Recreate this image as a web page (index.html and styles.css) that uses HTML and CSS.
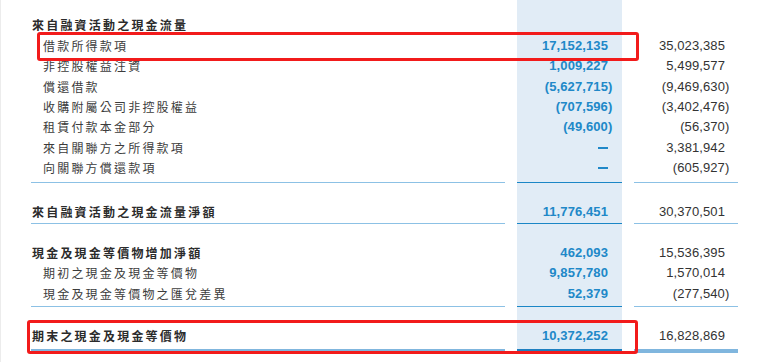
FILE: index.html
```html
<!DOCTYPE html>
<html lang="zh-Hant">
<head>
<meta charset="utf-8">
<title>來自融資活動之現金流量</title>
<link rel="stylesheet" href="styles.css">
</head>
<body>
<div class="sheet">
  <div class="row top">
    <div class="cell label"></div>
    <div class="cell cur"></div>
    <div class="cell prev"></div>
  </div>

  <div class="row">
    <div class="cell label">
      <div class="line head">來自融資活動之現金流量</div>
      <div class="items">
        <div class="line sub">借款所得款項</div>
        <div class="line sub">非控股權益注資</div>
        <div class="line sub">償還借款</div>
        <div class="line sub">收購附屬公司非控股權益</div>
        <div class="line sub">租賃付款本金部分</div>
        <div class="line sub">來自關聯方之所得款項</div>
        <div class="line sub">向關聯方償還款項</div>
      </div>
    </div>
    <div class="cell cur">
      <div class="line head"></div>
      <div class="items">
        <div class="line num">17,152,135</div>
        <div class="line num">1,009,227</div>
        <div class="line num"><span class="neg">(5,627,715)</span></div>
        <div class="line num"><span class="neg">(707,596)</span></div>
        <div class="line num"><span class="neg">(49,600)</span></div>
        <div class="line num"><span class="dash">–</span></div>
        <div class="line num"><span class="dash">–</span></div>
      </div>
    </div>
    <div class="cell prev">
      <div class="line head"></div>
      <div class="items">
        <div class="line num">35,023,385</div>
        <div class="line num">5,499,577</div>
        <div class="line num"><span class="neg">(9,469,630)</span></div>
        <div class="line num"><span class="neg">(3,402,476)</span></div>
        <div class="line num"><span class="neg">(56,370)</span></div>
        <div class="line num">3,381,942</div>
        <div class="line num"><span class="neg">(605,927)</span></div>
      </div>
    </div>
  </div>

  <div class="row gap"><div class="cell label"></div><div class="cell cur"></div><div class="cell prev"></div></div>

  <div class="row boxed net">
    <div class="cell label"><div class="line head">來自融資活動之現金流量淨額</div></div>
    <div class="cell cur"><div class="line num">11,776,451</div></div>
    <div class="cell prev"><div class="line num">30,370,501</div></div>
  </div>

  <div class="row boxed change">
    <div class="cell label">
      <div class="line head">現金及現金等價物增加淨額</div>
      <div class="line sub">期初之現金及現金等價物</div>
      <div class="line sub">現金及現金等價物之匯兌差異</div>
    </div>
    <div class="cell cur">
      <div class="line num">462,093</div>
      <div class="line num">9,857,780</div>
      <div class="line num">52,379</div>
    </div>
    <div class="cell prev">
      <div class="line num">15,536,395</div>
      <div class="line num">1,570,014</div>
      <div class="line num"><span class="neg">(277,540)</span></div>
    </div>
  </div>

  <div class="row final">
    <div class="cell label"><div class="line head">期末之現金及現金等價物</div></div>
    <div class="cell cur"><div class="line num">10,372,252</div></div>
    <div class="cell prev"><div class="line num">16,828,869</div></div>
  </div>

  <div class="mark mark-borrow"></div>
  <div class="mark mark-end"></div>
</div>
</body>
</html>
```

FILE: styles.css
```css
html, body {
  margin: 0;
  padding: 0;
  background: #ffffff;
}

body {
  width: 781px;
  height: 362px;
  overflow: hidden;
  border-left: 1px solid #ececec;
  box-sizing: border-box;
}

.sheet {
  position: relative;
  padding-left: 30px;
  font-family: "Noto Sans CJK TC", "Noto Sans CJK SC", sans-serif;
}

.row {
  display: grid;
  grid-template-columns: 474px 105px 104px;
  column-gap: 12px;
}

.cell {
  box-sizing: border-box;
}

.cur {
  background: #e1ecf6;
  padding-right: 14px;
}

.prev {
  padding-right: 13px;
}

.top .cell {
  height: 15px;
}

.line {
  height: 20.33px;
  line-height: 20px;
  white-space: nowrap;
}

.line.head {
  height: 21px;
  font-size: 12px;
  letter-spacing: 2.2px;
  font-weight: 700;
  color: #2b2b2b;
  padding-left: 1px;
}

.line.sub {
  font-size: 12px;
  letter-spacing: 2.2px;
  color: #3c3c3c;
  padding-left: 12px;
}

.line.num {
  font-family: "Liberation Sans", Arial, sans-serif;
  font-size: 13px;
  text-align: right;
  letter-spacing: 0.1px;
}

.cur .line.num {
  color: #2088c8;
  font-weight: 700;
}

.prev .line.num {
  color: #333333;
}

.neg {
  margin-right: -4.4px;
}

.dash {
  display: inline-block;
  width: 10px;
  height: 2px;
  background: #2088c8;
  vertical-align: middle;
  margin-bottom: 1px;
  color: transparent;
  overflow: hidden;
  font-size: 2px;
  line-height: 2px;
}

.gap .cell {
  height: 3.7px;
}

.boxed .cell {
  border-bottom: 1px solid #8cc1e5;
}

.boxed .cur {
  border-bottom-color: #1a86c6;
}

.net .cell {
  border-top: 1px solid #8cc1e5;
  padding-top: 19px;
  padding-bottom: 1px;
}

.net .cur {
  border-top-color: #1a86c6;
}

.net .line.head {
  height: 20px;
}

.net .line.num {
  height: 20px;
}

.change .cell {
  padding-top: 19px;
  padding-bottom: 2px;
}

.change .line.head {
  height: 20.33px;
}

.final .cell {
  padding-top: 19px;
  padding-bottom: 3px;
  border-bottom: 4px solid #80b6de;
}

.final .cur {
  border-bottom-color: #1e7fc0;
}

.final .line {
  height: 20px;
}

.mark {
  position: absolute;
  box-sizing: border-box;
  border: 3px solid #f21b1b;
  border-radius: 3px;
}

.mark-borrow {
  left: 36px;
  top: 32px;
  width: 602px;
  height: 29px;
}

.mark-end {
  left: 26px;
  top: 320px;
  width: 611px;
  height: 34px;
}
```
